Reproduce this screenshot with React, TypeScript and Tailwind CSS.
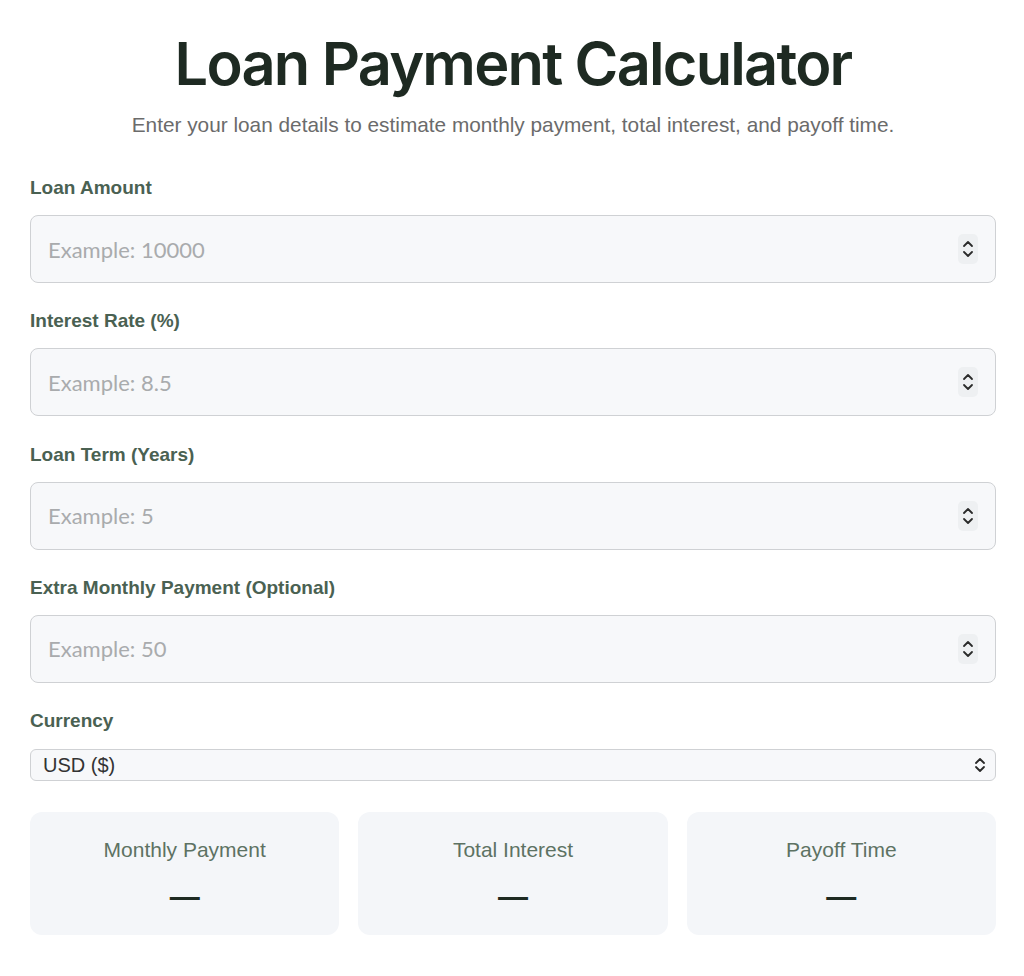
import { useState } from 'react'

const fields = [
  { key: 'amount', label: 'Loan Amount', placeholder: 'Example: 10000' },
  { key: 'rate', label: 'Interest Rate (%)', placeholder: 'Example: 8.5' },
  { key: 'term', label: 'Loan Term (Years)', placeholder: 'Example: 5' },
  { key: 'extra', label: 'Extra Monthly Payment (Optional)', placeholder: 'Example: 50' },
]

function Stepper() {
  return (
    <span className="flex flex-col items-center justify-center w-[20px] h-[30px] rounded-[5px] bg-[#eef0f2]">
      <svg width="12" height="22" viewBox="0 0 12 22" fill="none" stroke="#2a2a2a" strokeWidth="1.8" strokeLinecap="round" strokeLinejoin="round">
        <path d="M2 8 L6 4 L10 8" />
        <path d="M2 14 L6 18 L10 14" />
      </svg>
    </span>
  )
}

export default function App() {
  const [values, setValues] = useState<Record<string, string>>({})
  const [currency, setCurrency] = useState('USD')

  const results = [
    { label: 'Monthly Payment', value: '—' },
    { label: 'Total Interest', value: '—' },
    { label: 'Payoff Time', value: '—' },
  ]

  return (
    <div className="min-h-screen bg-white font-['Liberation_Sans',Arial,sans-serif]">
      <div className="mx-auto w-[966px] pt-[27px] pb-10 translate-x-[1px]">
        <h1 className="text-center text-[59.5px] leading-[72px] font-semibold tracking-[-0.03em] text-[#1e2a22] font-['Inter',sans-serif]">
          Loan Payment Calculator
        </h1>
        <p className="mt-[13px] text-center text-[20.8px] leading-[26px] text-[#6b6b6b]">
          Enter your loan details to estimate monthly payment, total interest, and payoff time.
        </p>

        <form className="mt-[40px] flex flex-col" onSubmit={(e) => e.preventDefault()}>
          {fields.map((f) => (
            <div key={f.key} className="mb-[28.3px]">
              <label className="block text-[19px] leading-[20px] font-bold text-[#4a6152]">{f.label}</label>
              <div className="mt-[17px] flex items-center h-[68px] rounded-[8px] border border-[#cfd1d4] bg-[#f7f8fa] pl-[17px] pr-[17px]">
                <input
                  type="text"
                  inputMode="decimal"
                  value={values[f.key] ?? ''}
                  onChange={(e) => setValues({ ...values, [f.key]: e.target.value })}
                  placeholder={f.placeholder}
                  className="flex-1 bg-transparent outline-none text-[22px] text-[#333] placeholder:text-[#a9abad] font-['Lato',sans-serif]"
                />
                <Stepper />
              </div>
            </div>
          ))}

          <div>
            <label className="block text-[19px] leading-[20px] font-bold text-[#4a6152]">Currency</label>
            <div className="relative mt-[18px]">
              <select
                value={currency}
                onChange={(e) => setCurrency(e.target.value)}
                className="appearance-none w-full h-[32px] rounded-[6px] border border-[#cfd1d4] bg-[#f7f8fa] pl-[12px] text-[20px] text-[#333] outline-none"
              >
                <option value="USD">USD ($)</option>
                <option value="EUR">EUR (€)</option>
                <option value="GBP">GBP (£)</option>
              </select>
              <svg className="absolute right-[10px] top-[7px] pointer-events-none" width="12" height="18" viewBox="0 0 12 18" fill="none" stroke="#2a2a2a" strokeWidth="1.8" strokeLinecap="round" strokeLinejoin="round">
                <path d="M2 7 L6 3 L10 7" />
                <path d="M2 11 L6 15 L10 11" />
              </svg>
            </div>
          </div>

          <div className="mt-[31px] grid grid-cols-3 gap-[19px]">
            {results.map((r) => (
              <div key={r.label} className="h-[123px] rounded-[12px] bg-[#f4f6f9] flex flex-col items-center pt-[26px]">
                <span className="text-[21px] leading-[24px] text-[#5d7263]">{r.label}</span>
                <span className="mt-[17px] text-[30px] leading-[36px] font-bold text-[#1e2a22]">{r.value}</span>
              </div>
            ))}
          </div>
        </form>
      </div>
    </div>
  )
}
